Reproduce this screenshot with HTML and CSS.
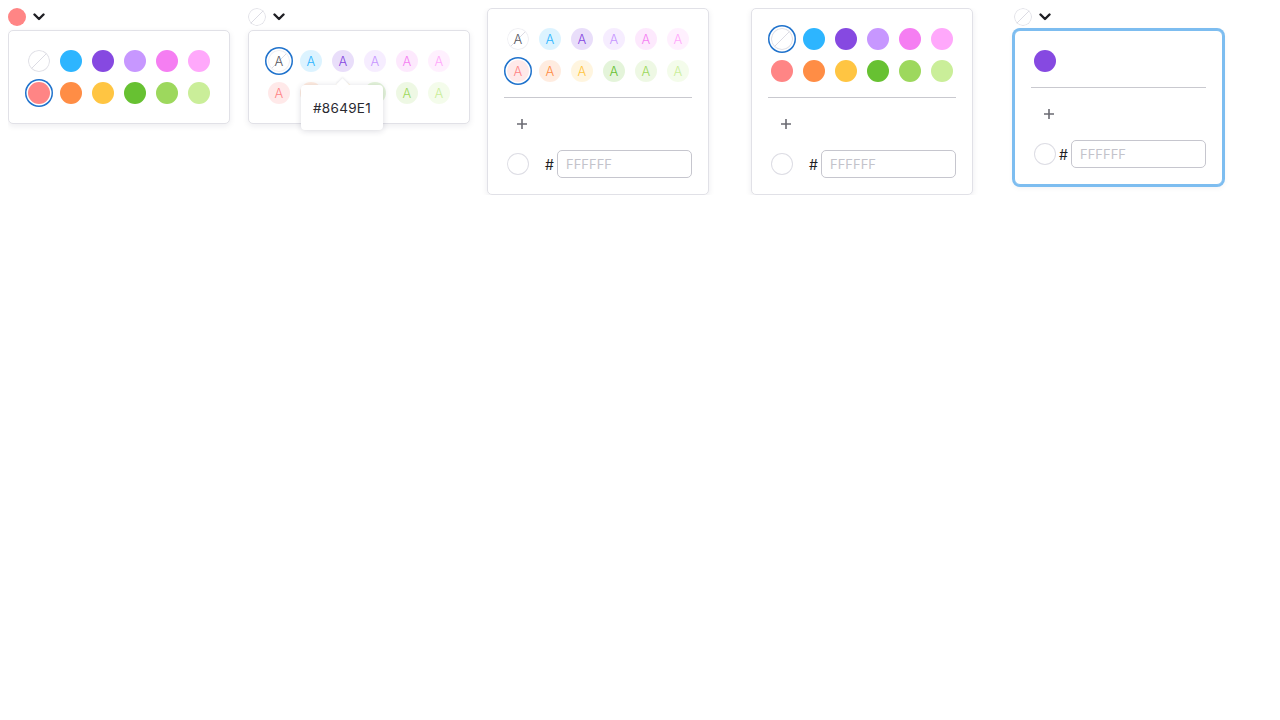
FILE: index.html
```html
<!DOCTYPE html>
<html>
<head>
<meta charset="utf-8">
<link rel="stylesheet" href="styles.css">
</head>
<body>
<div class="row">
  <!-- demo 1 -->
  <div class="demo d1">
    <div class="trigger">
      <span class="tdot c-red"></span>
      <svg class="chev" width="12" height="8" viewBox="0 0 12 8"><path d="M1.5 1.5 L6 6 L10.5 1.5" fill="none" stroke="#1f1f24" stroke-width="2.4" stroke-linecap="round" stroke-linejoin="round"/></svg>
    </div>
    <div class="panel">
      <div class="grid">
        <span class="sw"><span class="dot none"></span></span>
        <span class="sw"><span class="dot c-blue"></span></span>
        <span class="sw"><span class="dot c-purple"></span></span>
        <span class="sw"><span class="dot c-lpurple"></span></span>
        <span class="sw"><span class="dot c-pink"></span></span>
        <span class="sw"><span class="dot c-lpink"></span></span>
        <span class="sw sel"><span class="dot c-red"></span></span>
        <span class="sw"><span class="dot c-orange"></span></span>
        <span class="sw"><span class="dot c-yellow"></span></span>
        <span class="sw"><span class="dot c-green"></span></span>
        <span class="sw"><span class="dot c-lgreen"></span></span>
        <span class="sw"><span class="dot c-pgreen"></span></span>
      </div>
    </div>
  </div>

  <!-- demo 2 -->
  <div class="demo d2">
    <div class="trigger">
      <span class="tdot none"></span>
      <svg class="chev" width="12" height="8" viewBox="0 0 12 8"><path d="M1.5 1.5 L6 6 L10.5 1.5" fill="none" stroke="#1f1f24" stroke-width="2.4" stroke-linecap="round" stroke-linejoin="round"/></svg>
    </div>
    <div class="panel">
      <div class="grid">
        <span class="sw sel"><span class="dot tx none">A</span></span>
        <span class="sw"><span class="dot tx t-blue">A</span></span>
        <span class="sw"><span class="dot tx t-purple">A</span></span>
        <span class="sw"><span class="dot tx t-lpurple">A</span></span>
        <span class="sw"><span class="dot tx t-pink">A</span></span>
        <span class="sw"><span class="dot tx t-lpink">A</span></span>
        <span class="sw"><span class="dot tx t-red">A</span></span>
        <span class="sw"><span class="dot tx t-orange">A</span></span>
        <span class="sw"><span class="dot tx t-yellow">A</span></span>
        <span class="sw"><span class="dot tx t-green">A</span></span>
        <span class="sw"><span class="dot tx t-lgreen">A</span></span>
        <span class="sw"><span class="dot tx t-pgreen">A</span></span>
      </div>
      <div class="tooltip">#8649E1</div>
    </div>
  </div>

  <!-- demo 3 -->
  <div class="demo d3">
    <div class="panel">
      <div class="grid">
        <span class="sw"><span class="dot tx none">A</span></span>
        <span class="sw"><span class="dot tx t-blue">A</span></span>
        <span class="sw"><span class="dot tx t-purple">A</span></span>
        <span class="sw"><span class="dot tx t-lpurple">A</span></span>
        <span class="sw"><span class="dot tx t-pink">A</span></span>
        <span class="sw"><span class="dot tx t-lpink">A</span></span>
        <span class="sw sel"><span class="dot tx t-red">A</span></span>
        <span class="sw"><span class="dot tx t-orange">A</span></span>
        <span class="sw"><span class="dot tx t-yellow">A</span></span>
        <span class="sw"><span class="dot tx t-green">A</span></span>
        <span class="sw"><span class="dot tx t-lgreen">A</span></span>
        <span class="sw"><span class="dot tx t-pgreen">A</span></span>
      </div>
      <div class="divider"></div>
      <button class="add"><svg width="12" height="12" viewBox="0 0 12 12"><path d="M6 1 V11 M1 6 H11" stroke="#6b6b73" stroke-width="1.6"/></svg></button>
      <div class="hexrow">
        <span class="sw"><span class="dot blank"></span></span>
        <span class="hexfield"><span class="hash">#</span><input class="hex" placeholder="FFFFFF"></span>
      </div>
    </div>
  </div>

  <!-- demo 4 -->
  <div class="demo d4">
    <div class="panel">
      <div class="grid">
        <span class="sw sel"><span class="dot none"></span></span>
        <span class="sw"><span class="dot c-blue"></span></span>
        <span class="sw"><span class="dot c-purple"></span></span>
        <span class="sw"><span class="dot c-lpurple"></span></span>
        <span class="sw"><span class="dot c-pink"></span></span>
        <span class="sw"><span class="dot c-lpink"></span></span>
        <span class="sw"><span class="dot c-red"></span></span>
        <span class="sw"><span class="dot c-orange"></span></span>
        <span class="sw"><span class="dot c-yellow"></span></span>
        <span class="sw"><span class="dot c-green"></span></span>
        <span class="sw"><span class="dot c-lgreen"></span></span>
        <span class="sw"><span class="dot c-pgreen"></span></span>
      </div>
      <div class="divider"></div>
      <button class="add"><svg width="12" height="12" viewBox="0 0 12 12"><path d="M6 1 V11 M1 6 H11" stroke="#6b6b73" stroke-width="1.6"/></svg></button>
      <div class="hexrow">
        <span class="sw"><span class="dot blank"></span></span>
        <span class="hexfield"><span class="hash">#</span><input class="hex" placeholder="FFFFFF"></span>
      </div>
    </div>
  </div>

  <!-- demo 5 -->
  <div class="demo d5">
    <div class="trigger">
      <span class="tdot none"></span>
      <svg class="chev" width="12" height="8" viewBox="0 0 12 8"><path d="M1.5 1.5 L6 6 L10.5 1.5" fill="none" stroke="#1f1f24" stroke-width="2.4" stroke-linecap="round" stroke-linejoin="round"/></svg>
    </div>
    <div class="panel focus">
      <div class="grid one">
        <span class="sw"><span class="dot c-purple"></span></span>
      </div>
      <div class="divider"></div>
      <button class="add"><svg width="12" height="12" viewBox="0 0 12 12"><path d="M6 1 V11 M1 6 H11" stroke="#6b6b73" stroke-width="1.6"/></svg></button>
      <div class="hexrow">
        <span class="sw"><span class="dot blank"></span></span>
        <span class="hexfield"><span class="hash">#</span><input class="hex" placeholder="FFFFFF"></span>
      </div>
    </div>
  </div>
</div>
</body>
</html>
```

FILE: styles.css
```css
* { box-sizing: border-box; }
html, body { background: #fff; }
body {
  margin: 8px;
  font-family: Inter, "Noto Sans", sans-serif;
  font-size: 13px;
  color: #1f1f24;
}
.row {
  display: flex;
  align-items: flex-start;
}
.demo { flex: none; }
.d1 { width: 240px; }
.d2 { width: 239px; }
.d3 { width: 264px; }
.d4 { width: 263px; }
.d5 { width: 240px; }

.trigger {
  height: 18px;
  display: flex;
  align-items: center;
  gap: 5px;
  margin-bottom: 4px;
}
.tdot {
  width: 18px;
  height: 18px;
  border-radius: 50%;
  display: block;
}
.chev { display: block; margin-left: 2px; }

.panel {
  position: relative;
  display: inline-block;
  background: #fff;
  border: 1px solid #e1e1e7;
  border-radius: 5px;
  box-shadow: 0 2px 6px rgba(30, 30, 60, 0.08);
  padding: 16px;
}
.panel.focus {
  border-color: #7dbdf0;
  box-shadow: 0 0 0 2px #7dbdf0, 0 2px 6px rgba(30, 30, 60, 0.08);
  border-radius: 6px;
}

.grid {
  display: grid;
  grid-template-columns: repeat(6, 28px);
  grid-auto-rows: 28px;
  gap: 4px;
}
.grid.one { grid-template-columns: 28px; }

.sw {
  width: 28px;
  height: 28px;
  border-radius: 50%;
  display: flex;
  align-items: center;
  justify-content: center;
}
.sw.sel { box-shadow: inset 0 0 0 1.5px #1f72cc; }

.dot {
  width: 22px;
  height: 22px;
  border-radius: 50%;
  display: flex;
  align-items: center;
  justify-content: center;
}
.none {
  background: #fff linear-gradient(135deg, transparent calc(50% - 0.7px), #dcdce4 calc(50% - 0.7px), #dcdce4 calc(50% + 0.7px), transparent calc(50% + 0.7px));
  box-shadow: inset 0 0 0 1px #e2e2e8;
}
.blank {
  background: #fff;
  box-shadow: inset 0 0 0 1px #dedee5;
}
.tx {
  font-family: Inter, "Noto Sans", sans-serif;
  font-weight: 300;
  font-size: 13px;
  line-height: 1;
}
.tx.none { color: #5a5a62; box-shadow: inset 0 0 0 1px #f0f0f4; }

.c-blue { background: #2db5ff; }
.c-purple { background: #8649e1; }
.c-lpurple { background: #c797ff; }
.c-pink { background: #f57ef2; }
.c-lpink { background: #ffa8fb; }
.c-red { background: #ff8585; }
.c-orange { background: #ff8d45; }
.c-yellow { background: #ffc542; }
.c-green { background: #67c132; }
.c-lgreen { background: #9dd85d; }
.c-pgreen { background: #caee99; }

.t-blue { color: #2db5ff; background: rgba(45, 181, 255, 0.17); }
.t-purple { color: #8649e1; background: rgba(134, 73, 225, 0.18); }
.t-lpurple { color: #c797ff; background: rgba(199, 151, 255, 0.17); }
.t-pink { color: #f57ef2; background: rgba(245, 126, 242, 0.17); }
.t-lpink { color: #ffa8fb; background: rgba(255, 168, 251, 0.17); }
.t-red { color: #ff8585; background: rgba(255, 133, 133, 0.18); }
.t-orange { color: #ff8d45; background: rgba(255, 141, 69, 0.17); }
.t-yellow { color: #ffc542; background: rgba(255, 197, 66, 0.17); }
.t-green { color: #67c132; background: rgba(103, 193, 50, 0.18); }
.t-lgreen { color: #9dd85d; background: rgba(157, 216, 93, 0.17); }
.t-pgreen { color: #caee99; background: rgba(202, 238, 153, 0.2); }

.tooltip {
  position: absolute;
  left: 52px;
  top: 54px;
  width: 82px;
  height: 45px;
  background: #fff;
  border-radius: 4px;
  box-shadow: 0 1px 6px rgba(30, 30, 60, 0.16);
  display: flex;
  align-items: center;
  justify-content: center;
  font-size: 13.5px;
  color: #2a2a30;
  letter-spacing: 0.3px;
}
.tooltip::before {
  content: "";
  position: absolute;
  left: 37px;
  top: -5px;
  width: 9px;
  height: 9px;
  background: #fff;
  transform: rotate(45deg);
  box-shadow: -1px -1px 2px rgba(30, 30, 60, 0.08);
}

.divider {
  height: 1px;
  background: #c9c9cf;
  margin: 12px 0 12px;
}
.add {
  width: 36px;
  height: 28px;
  border: 0;
  background: transparent;
  padding: 0;
  display: flex;
  align-items: center;
  justify-content: center;
}
.hexrow {
  margin-top: 12px;
  display: flex;
  align-items: center;
  justify-content: space-between;
}
.hexfield {
  display: flex;
  align-items: center;
}
.hash {
  width: 8px;
  margin-right: 4px;
  font-size: 14px;
  color: #1f1f24;
}
.hex {
  width: 135px;
  height: 28px;
  border: 1px solid #c6c6ce;
  border-radius: 5px;
  padding: 0 8px;
  font-family: Inter, "Noto Sans", sans-serif;
  font-size: 13px;
  color: #1f1f24;
  outline: none;
}
.hex::placeholder { color: #c3c3cb; }
```
